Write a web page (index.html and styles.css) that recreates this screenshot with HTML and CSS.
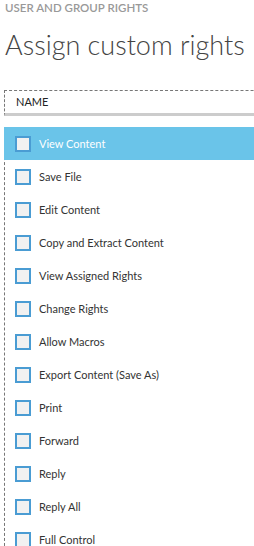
FILE: index.html
```html
<!DOCTYPE html>
<html lang="en">

<head>
    <meta charset="UTF-8">
    <meta name="viewport" content="width=device-width, initial-scale=1.0">
    <title>Assign custom rights</title>
    <link rel="stylesheet" href="styles.css">
</head>

<body>
    <p class="crumb">User and group rights</p>
    <h1 class="title">Assign custom rights</h1>

    <div class="grid">
        <div class="grid-head">Name</div>
        <ul class="rights">
            <li class="right selected"><span class="box"></span>View Content</li>
            <li class="right"><span class="box"></span>Save File</li>
            <li class="right"><span class="box"></span>Edit Content</li>
            <li class="right"><span class="box"></span>Copy and Extract Content</li>
            <li class="right"><span class="box"></span>View Assigned Rights</li>
            <li class="right"><span class="box"></span>Change Rights</li>
            <li class="right"><span class="box"></span>Allow Macros</li>
            <li class="right"><span class="box"></span>Export Content (Save As)</li>
            <li class="right"><span class="box"></span>Print</li>
            <li class="right"><span class="box"></span>Forward</li>
            <li class="right"><span class="box"></span>Reply</li>
            <li class="right"><span class="box"></span>Reply All</li>
            <li class="right"><span class="box"></span>Full Control</li>
        </ul>
    </div>
</body>

</html>
```

FILE: styles.css
```css
body {
    font-family: 'Lato', 'Open Sans', sans-serif;
    margin: 0;
    overflow: hidden;
    background-color: #fff;
    color: #333;
}

.crumb {
    margin: 0;
    padding: 0 0 0 5px;
    font-size: 11.5px;
    line-height: 15px;
    font-weight: 600;
    color: #999;
    text-transform: uppercase;
}

.title {
    margin: 12px 0 0 5px;
    font-size: 27px;
    line-height: 36px;
    font-weight: 300;
    color: #444;
    white-space: nowrap;
}

.grid {
    margin: 27px 0 0 4px;
    width: 320px;
}

.grid-head {
    height: 22px;
    line-height: 22px;
    padding-left: 11px;
    border-top: 1px dashed #777;
    border-left: 1px dashed #777;
    border-bottom: 3px solid #ccc;
    font-size: 11px;
    color: #222;
    text-transform: uppercase;
}

.rights {
    list-style: none;
    margin: 11px 0 0 0;
    padding: 0;
    border-left: 1px dashed #777;
}

.right {
    display: flex;
    align-items: center;
    height: 33px;
    padding-left: 10px;
    font-size: 11px;
    color: #333;
}

.right.selected {
    margin-left: -1px;
    padding-left: 11px;
    background-color: #6ac4e9;
    color: #fff;
}

.box {
    width: 16px;
    height: 16px;
    box-sizing: border-box;
    border: 2px solid #4a9cd3;
    background-color: #f1f1f1;
    margin-right: 8px;
}
```
